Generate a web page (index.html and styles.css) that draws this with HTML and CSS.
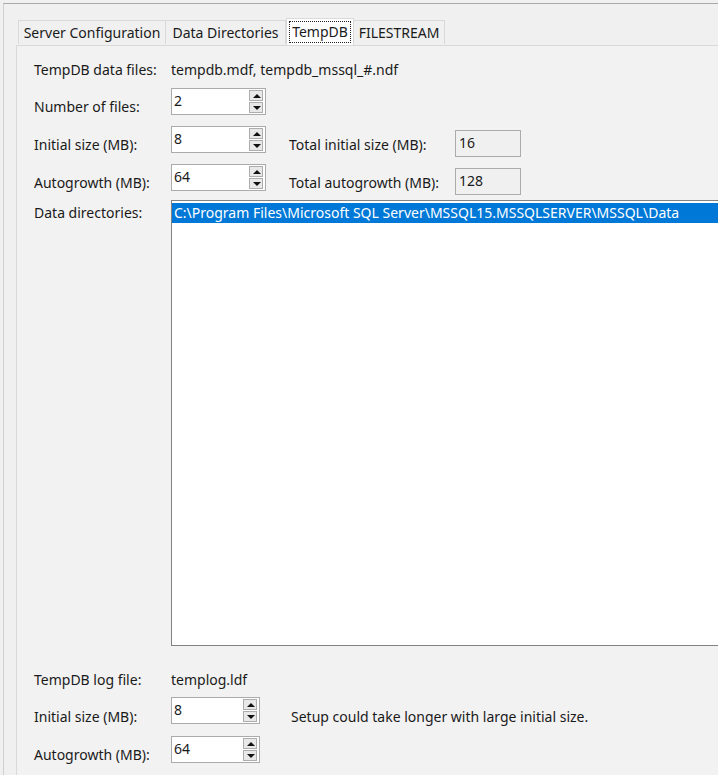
FILE: index.html
```html
<!DOCTYPE html>
<html lang="en">
<head>
    <meta charset="UTF-8">
    <title>TempDB</title>
    <link rel="stylesheet" href="styles.css">
</head>
<body>
    <div class="frame">
        <div class="tabs">
            <div class="tab" style="width: 148px">Server Configuration</div>
            <div class="tab" style="width: 120px">Data Directories</div>
            <div class="tab active" style="width: 68px"><span class="focus">TempDB</span></div>
            <div class="tab" style="width: 91px">FILESTREAM</div>
        </div>

        <div class="panel">
            <div class="row row-files">
                <div class="label">TempDB data files:</div>
                <div class="value">tempdb.mdf, tempdb_mssql_#.ndf</div>
            </div>

            <div class="row row-ctl row-number">
                <div class="label pad">Number of files:</div>
                <div class="spin">
                    <span class="spin-value">2</span>
                    <span class="spin-buttons"><span class="up"></span><span class="down"></span></span>
                </div>
            </div>

            <div class="row row-ctl row-gap">
                <div class="label pad">Initial size (MB):</div>
                <div class="spin">
                    <span class="spin-value">8</span>
                    <span class="spin-buttons"><span class="up"></span><span class="down"></span></span>
                </div>
                <div class="label total pad">Total initial size (MB):</div>
                <div class="readonly">16</div>
            </div>

            <div class="row row-ctl row-gap">
                <div class="label pad">Autogrowth (MB):</div>
                <div class="spin">
                    <span class="spin-value">64</span>
                    <span class="spin-buttons"><span class="up"></span><span class="down"></span></span>
                </div>
                <div class="label total pad">Total autogrowth (MB):</div>
                <div class="readonly">128</div>
            </div>

            <div class="row row-dirs">
                <div class="label top">Data directories:</div>
                <div class="listbox">
                    <div class="item selected">C:\Program Files\Microsoft SQL Server\MSSQL15.MSSQLSERVER\MSSQL\Data</div>
                </div>
            </div>

            <div class="row row-log">
                <div class="label">TempDB log file:</div>
                <div class="value">templog.ldf</div>
            </div>

            <div class="row row-ctl row-log-size">
                <div class="label pad-more">Initial size (MB):</div>
                <div class="spin narrow">
                    <span class="spin-value">8</span>
                    <span class="spin-buttons"><span class="up"></span><span class="down"></span></span>
                </div>
                <div class="note pad-more">Setup could take longer with large initial size.</div>
            </div>

            <div class="row row-ctl row-log-growth">
                <div class="label pad">Autogrowth (MB):</div>
                <div class="spin narrow">
                    <span class="spin-value">64</span>
                    <span class="spin-buttons"><span class="up"></span><span class="down"></span></span>
                </div>
            </div>
        </div>
    </div>
</body>
</html>
```

FILE: styles.css
```css
html, body {
    margin: 0;
    height: 100%;
    overflow: hidden;
}
body {
    font-family: "Noto Sans", "Open Sans", sans-serif;
    font-size: 14px;
    color: #1a1a1a;
    background-color: #f0f0f0;
}
.frame {
    margin: 3px 0 0 3px;
    padding: 14px 0 0 12px;
    border-top: 1px solid #a9a9a9;
    border-left: 1px solid #cfcfcf;
    height: 100%;
    box-sizing: border-box;
}
.tabs {
    display: flex;
    align-items: flex-end;
    height: 27px;
    margin-left: 2px;
}
.tab {
    height: 24px;
    line-height: 23px;
    text-align: center;
    box-sizing: border-box;
    border: 1px solid #d9d9d9;
    border-bottom: none;
    background: #f0f0f0;
    white-space: nowrap;
    margin-bottom: 1px;
}
.tab + .tab {
    border-left: none;
}
.tab.active {
    height: 27px;
    background: #fff;
    border: 1px solid #d9d9d9;
    border-bottom: none;
    margin-bottom: 0;
    padding: 2px 2px 0;
    line-height: 22px;
    position: relative;
    z-index: 1;
}
.tab.active + .tab {
    border-left: none;
}
.focus {
    display: block;
    height: 22px;
    border: 1px dotted #222;
    box-sizing: border-box;
    line-height: 20px;
}
.panel {
    border-top: 1px solid #d9d9d9;
    border-left: 1px solid #d9d9d9;
    background: #f2f2f2;
    padding: 12px 0 0 17px;
    height: 100%;
}
.row {
    display: flex;
    align-items: flex-start;
}
.row-ctl {
    height: 27px;
}
.label {
    width: 137px;
    flex: none;
    line-height: 24px;
    white-space: nowrap;
}
.value, .note {
    line-height: 24px;
    white-space: nowrap;
}
.pad, .pad-more {
    height: 27px;
    box-sizing: border-box;
    padding-top: 7px;
}
.pad-more {
    padding-top: 8px;
}
.top {
    padding-top: 1px;
}
.row-number {
    margin-top: 6px;
}
.row-gap {
    margin-top: 11px;
}
.row-dirs {
    margin-top: 9px;
}
.row-log {
    margin-top: 22px;
}
.row-log-size {
    margin-top: 5px;
}
.row-log-growth {
    margin-top: 12px;
}
.spin {
    flex: none;
    width: 95px;
    height: 27px;
    box-sizing: border-box;
    border: 1px solid #ababab;
    background: #fff;
    display: flex;
    justify-content: space-between;
    padding: 1px 1px 1px 2px;
}
.spin.narrow {
    width: 89px;
}
.spin-value {
    line-height: 22px;
}
.spin-buttons {
    width: 14px;
    display: flex;
    flex-direction: column;
    gap: 1px;
    padding-right: 1px;
}
.spin-buttons span {
    flex: 1;
    background: #e8e8e8;
    border: 1px solid #adadad;
    position: relative;
}
.spin-buttons span::after {
    content: "";
    position: absolute;
    left: 3px;
    top: 3px;
    border-left: 4px solid transparent;
    border-right: 4px solid transparent;
}
.spin-buttons .up::after {
    border-bottom: 4px solid #111;
}
.spin-buttons .down::after {
    border-top: 4px solid #111;
}
.total {
    width: 166px;
    margin-left: 23px;
}
.readonly {
    flex: none;
    width: 66px;
    height: 27px;
    margin-top: 4px;
    box-sizing: border-box;
    border: 1px solid #ababab;
    background: #f0f0f0;
    padding-left: 3px;
    line-height: 23px;
}
.note {
    margin-left: 31px;
}
.listbox {
    flex: none;
    width: 600px;
    height: 446px;
    box-sizing: border-box;
    border: 1px solid #828282;
    background: #fff;
    padding-top: 2px;
}
.item {
    height: 20px;
    line-height: 20px;
    padding-left: 2px;
    white-space: nowrap;
}
.item.selected {
    background: #0078d7;
    color: #fff;
}
```
